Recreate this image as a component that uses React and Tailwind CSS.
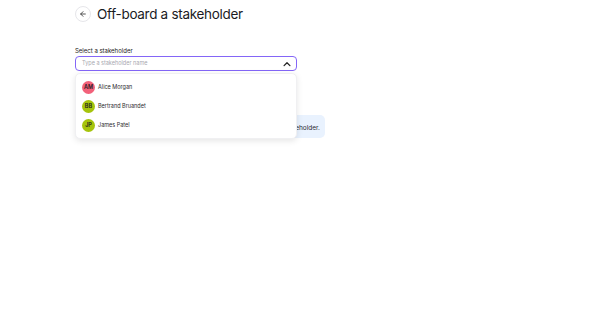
const people = [
    { initials: 'AM', name: 'Alice Morgan', color: 'bg-[#f2617a]' },
    { initials: 'BB', name: 'Bertrand Bruandet', color: 'bg-[#a6c40c]' },
    { initials: 'JP', name: 'James Patel', color: 'bg-[#a6c40c]' },
];

export default function App() {
    return (
        <div className="w-[600px] h-[322px] bg-white font-['Inter',sans-serif] text-[#1b1b1f]">
            <div className="flex flex-col pl-[75px] pt-[6px]">
                <div className="flex items-center gap-[6px]">
                    <button className="w-[16px] h-[16px] rounded-full border border-[#e6e6ea] flex items-center justify-center text-[#333]">
                        <svg width="8" height="8" viewBox="0 0 24 24" fill="none" stroke="currentColor" strokeWidth="2.5" strokeLinecap="round" strokeLinejoin="round">
                            <path d="M19 12H5" />
                            <path d="M12 19l-7-7 7-7" />
                        </svg>
                    </button>
                    <h1 className="text-[13.5px] leading-[16px] font-normal tracking-[-0.3px]">Off-board a stakeholder</h1>
                </div>

                <label className="mt-[25px] text-[6px] leading-[8px] text-[#222]">Select a stakeholder</label>

                <div className="relative w-[222px] mt-[1px]">
                    <div className="h-[15px] rounded-[4px] border-[1.5px] border-[#8466f7] flex items-center justify-between pl-[6px] pr-[4px]">
                        <span className="text-[5.5px] text-[#a8a8b0]">Type a stakeholder name</span>
                        <svg width="10" height="10" viewBox="0 0 24 24" fill="none" stroke="#222" strokeWidth="3" strokeLinecap="round" strokeLinejoin="round">
                            <path d="M5 16l7-7 7 7" />
                        </svg>
                    </div>

                    <div className="absolute left-0 top-[17px] w-[222px] bg-white rounded-[5px] border border-[#f0f0f2] shadow-[0_2px_6px_rgba(0,0,0,0.10)] py-[3.5px] px-[6px] z-10">
                        {people.map((p) => (
                            <div key={p.name} className="flex items-center gap-[3px] h-[19px]">
                                <div className={`w-[13px] h-[13px] rounded-full ${p.color} flex items-center justify-center text-[5.5px] font-semibold text-[#1b1b1f]`}>
                                    {p.initials}
                                </div>
                                <span className="text-[5.5px] text-[#2a2a2e]">{p.name}</span>
                            </div>
                        ))}
                    </div>
                </div>

                <div className="mt-[44px] w-[250px] h-[23px] rounded-[5px] bg-[#e9f2fe] flex items-end justify-end pr-[5px] pb-[6px]">
                    <span className="text-[6.5px] leading-[8px] text-[#2a2a2e] whitespace-nowrap">This will remove all access for the selected stakeholder.</span>
                </div>
            </div>
        </div>
    );
}
